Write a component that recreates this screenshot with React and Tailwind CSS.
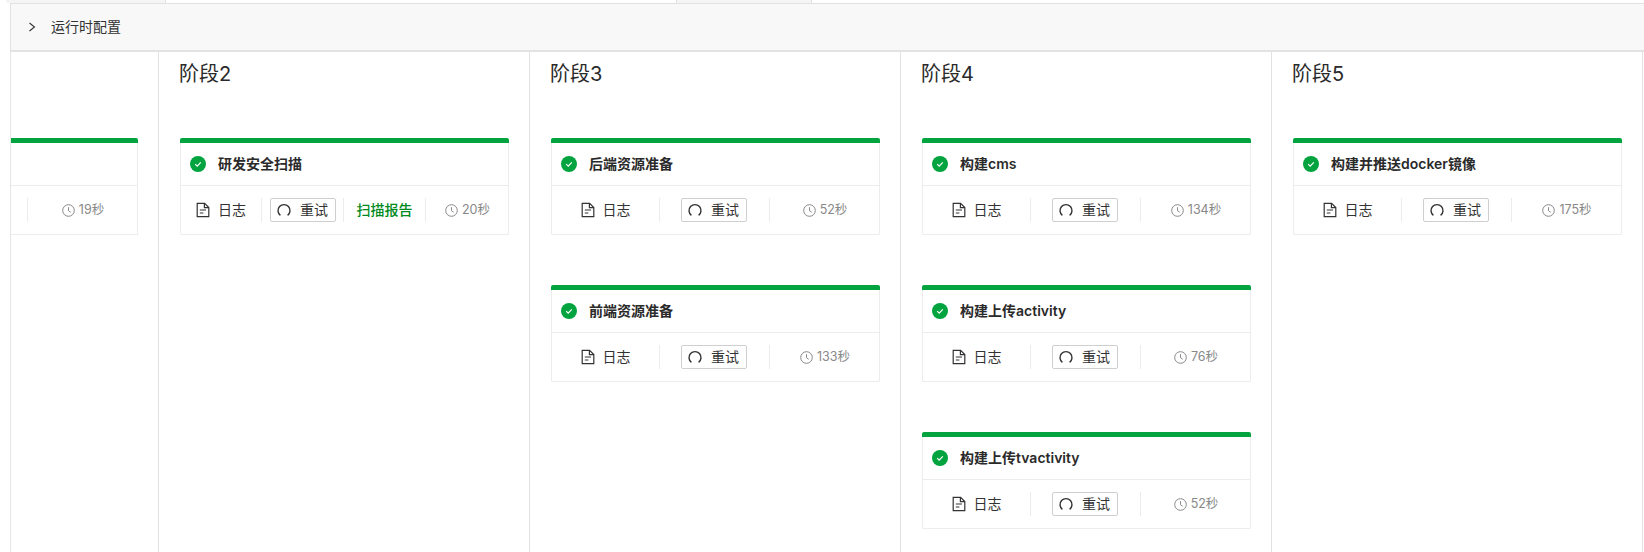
import React from "react";

const FONT = { fontFamily: '"Inter", "Noto Sans CJK SC", sans-serif' };

const COLUMNS = [
  { id: 2, title: "阶段2", jobs: [{ name: "研发安全扫描", time: "20秒", report: true }] },
  {
    id: 3,
    title: "阶段3",
    jobs: [
      { name: "后端资源准备", time: "52秒" },
      { name: "前端资源准备", time: "133秒" },
    ],
  },
  {
    id: 4,
    title: "阶段4",
    jobs: [
      { name: "构建cms", time: "134秒" },
      { name: "构建上传activity", time: "76秒" },
      { name: "构建上传tvactivity", time: "52秒" },
    ],
  },
  { id: 5, title: "阶段5", jobs: [{ name: "构建并推送docker镜像", time: "175秒" }] },
];

function CheckIcon() {
  return (
    <svg width="16" height="16" viewBox="0 0 16 16" className="shrink-0">
      <circle cx="8" cy="8" r="8" fill="#03a33f" />
      <path d="M5.2 8.2l2 2 3.6-3.8" fill="none" stroke="#fff" strokeWidth="1.2" />
    </svg>
  );
}

function FileIcon() {
  return (
    <svg width="16" height="16" viewBox="0 0 16 16" fill="none" stroke="#333" strokeWidth="1.2" className="shrink-0">
      <path d="M2.2 1.3h7.4l4.2 4.2v9.2H2.2z" />
      <path d="M9.4 1.3v4.4h4.4M4.8 8h6.2M4.8 11h3.6" />
    </svg>
  );
}

function RetryIcon() {
  return (
    <svg width="14" height="14" viewBox="0 0 14 14" fill="none" stroke="#333" strokeWidth="1.4" className="shrink-0">
      <path d="M3.4 12.4A6 6 0 1 1 10.6 12.4" />
    </svg>
  );
}

function ClockIcon() {
  return (
    <svg width="13" height="13" viewBox="0 0 13 13" fill="none" stroke="#888" strokeWidth="1" className="shrink-0">
      <circle cx="6.5" cy="6.5" r="5.8" />
      <path d="M6.5 3.2v3.5l2.2 1.6" />
    </svg>
  );
}

function Sep() {
  return <div className="h-6 w-px bg-[#ececec] shrink-0" />;
}

function RetryButton() {
  return (
    <div className="w-[66px] h-6 rounded-[2px] border border-[#cfcfcf] flex items-center justify-center gap-[9px]">
      <RetryIcon />
      重试
    </div>
  );
}

function Time({ value }) {
  return (
    <div className="flex-1 flex justify-center items-center gap-1 text-[12.5px] text-[#888]">
      <ClockIcon />
      {value}
    </div>
  );
}

function JobCard({ job }) {
  return (
    <div className="w-[329px] h-[97px] rounded-[2px] border-t-[5px] border-t-[#03a33f] bg-white shadow-[inset_1px_0_0_#ececec,inset_-1px_0_0_#ececec,inset_0_-1px_0_#ececec]">
      <div className="h-[43px] flex items-center pl-[9px] border-b border-[#ececec] mx-px">
        <CheckIcon />
        <span className="ml-[12px] text-sm font-semibold text-[#2a2a2a]">{job.name}</span>
      </div>
      <div className="h-[48px] flex items-center text-sm text-[#333]">
        {job.report ? (
          <>
            <div className="w-[81px] flex justify-center items-center gap-[7px]"><FileIcon />日志</div>
            <Sep />
            <div className="w-[81px] flex justify-center"><RetryButton /></div>
            <Sep />
            <div className="w-[81px] flex justify-center font-medium text-[#008a1e]">扫描报告</div>
            <Sep />
            <Time value={job.time} />
          </>
        ) : (
          <>
            <div className="w-[108px] flex justify-center items-center gap-[7px]"><FileIcon />日志</div>
            <Sep />
            <div className="w-[109px] flex justify-center pr-[2px]"><RetryButton /></div>
            <Sep />
            <Time value={job.time} />
          </>
        )}
      </div>
    </div>
  );
}

// first stage is scrolled off to the left, only the tail of its card shows
function ClippedCard({ time }) {
  return (
    <div className="w-[127px] h-[97px] rounded-tr-[2px] border-t-[5px] border-t-[#03a33f] bg-white shadow-[inset_-1px_0_0_#ececec,inset_0_-1px_0_#ececec]">
      <div className="h-[43px] border-b border-[#ececec] mr-px" />
      <div className="h-[48px] flex items-center pl-[16px]">
        <Sep />
        <Time value={time} />
      </div>
    </div>
  );
}

export default function App() {
  return (
    <div className="w-[1644px] h-[552px] overflow-hidden bg-white flex flex-col" style={FONT}>
      <div className="h-[3px] flex shrink-0 pl-[6px]">
        <div className="w-[160px] bg-[#f5f5f5] border-r border-[#e2e2e2]" />
        <div className="w-[510px]" />
        <div className="w-[136px] bg-[#f5f5f5] border-x border-[#e2e2e2]" />
      </div>
      <div className="h-[49px] shrink-0 ml-[10px] bg-[#f8f8f8] border-t border-b-2 border-l border-[#e2e2e2] flex items-center pl-4">
        <svg width="10" height="10" viewBox="0 0 10 10" fill="none" stroke="#333" strokeWidth="1.1" className="shrink-0">
          <path d="M2.5 1l5 4-5 4" />
        </svg>
        <span className="ml-[14px] text-sm text-[#333]">运行时配置</span>
      </div>
      <div className="flex-1 flex ml-[10px] border-l border-[#e6e6e6] overflow-hidden">
        <div className="w-[148px] shrink-0 border-r border-[#e2e2e2] pt-[86px]">
          <ClippedCard time="19秒" />
        </div>
        {COLUMNS.map((col) => (
          <div key={col.id} className="w-[371px] shrink-0 border-r border-[#e2e2e2] pl-[21px]">
            <h3 className="h-[86px] -ml-px pt-[8px] text-xl leading-7 text-[#2a2a2a]">{col.title}</h3>
            <div className="flex flex-col gap-[50px]">
              {col.jobs.map((job) => (
                <JobCard key={job.name} job={job} />
              ))}
            </div>
          </div>
        ))}
      </div>
    </div>
  );
}
